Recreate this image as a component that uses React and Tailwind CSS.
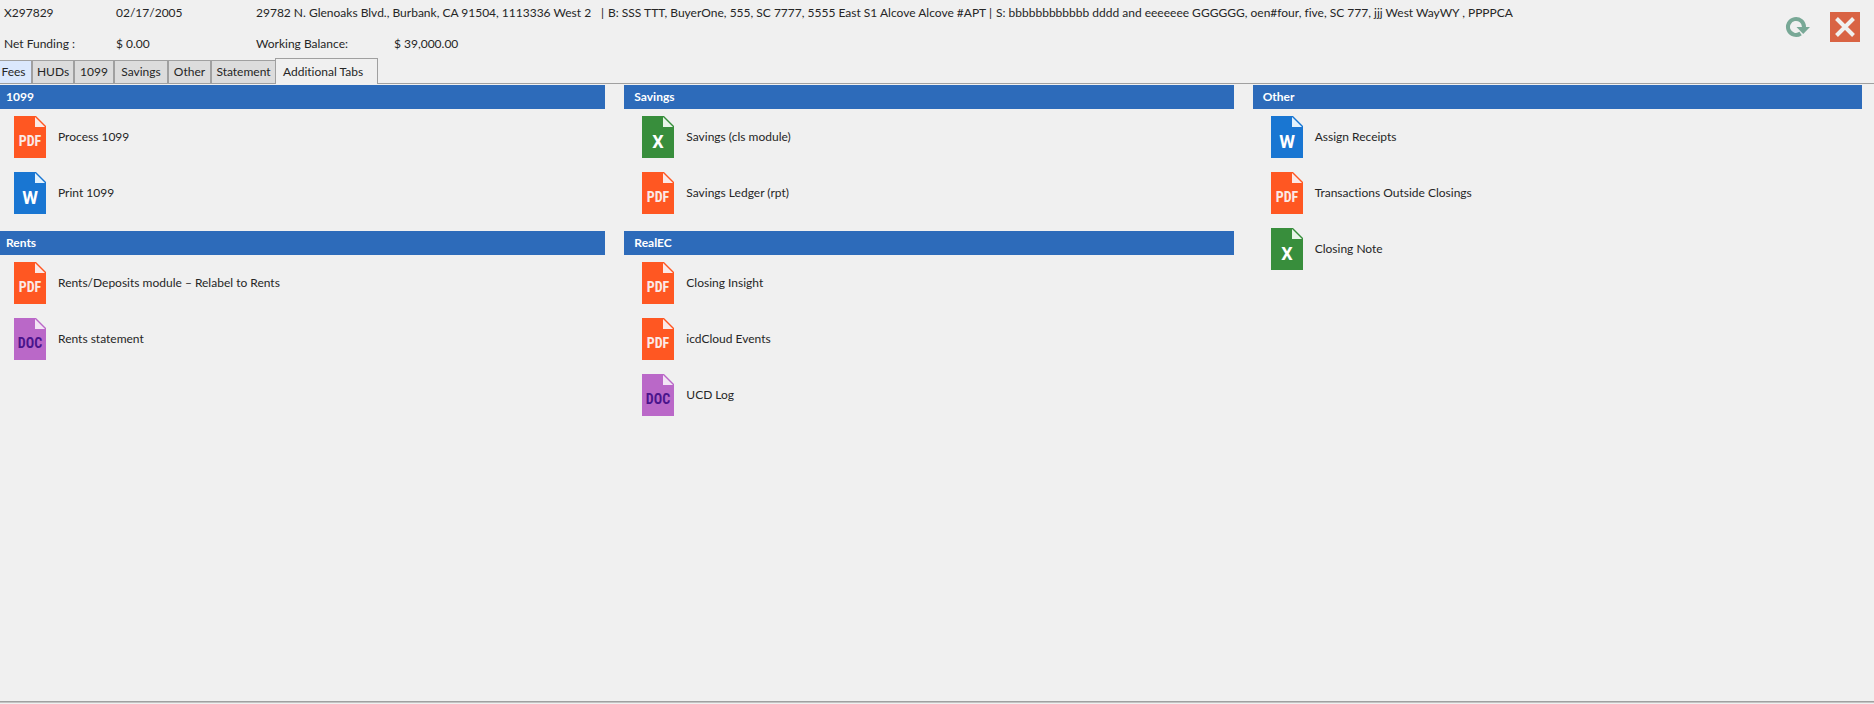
const FILE_KINDS = {
  pdf: { label: "PDF", body: "#ff5722", fold: "#fbe9e7", text: "#fbe9e7", font: "'Roboto Condensed', Roboto, sans-serif", size: 14, y: 30 },
  word: { label: "W", body: "#1976d2", fold: "#e3f2fd", text: "#ffffff", font: "Roboto, sans-serif", size: 18, y: 32 },
  excel: { label: "X", body: "#388e3c", fold: "#e8f5e9", text: "#ffffff", font: "Roboto, sans-serif", size: 18, y: 32 },
  doc: { label: "DOC", body: "#ba68c8", fold: "#f3e5f5", text: "#4a148c", font: "'Roboto Condensed', Roboto, sans-serif", size: 14, y: 30 },
};

const COLUMNS = [
  [
    { title: "1099", items: [["pdf", "Process 1099"], ["word", "Print 1099"]] },
    { title: "Rents", items: [["pdf", "Rents/Deposits module – Relabel to Rents"], ["doc", "Rents statement"]] },
  ],
  [
    { title: "Savings", items: [["excel", "Savings (cls module)"], ["pdf", "Savings Ledger (rpt)"]] },
    { title: "RealEC", items: [["pdf", "Closing Insight"], ["pdf", "icdCloud Events"], ["doc", "UCD Log"]] },
  ],
  [
    { title: "Other", items: [["word", "Assign Receipts"], ["pdf", "Transactions Outside Closings"], ["excel", "Closing Note"]] },
  ],
];

const TABS = [
  ["Fees", "w-8 border-l-0 bg-[#dbe8fd] pr-1"],
  ["HUDs", "w-[42px] bg-[#dcdcdc]"],
  ["1099", "w-10 bg-[#dcdcdc]"],
  ["Savings", "w-[54px] bg-[#dcdcdc]"],
  ["Other", "w-[43px] bg-[#dcdcdc]"],
  ["Statement", "w-16 border-r-0 bg-[#dcdcdc]"],
];

function FileIcon({ kind }) {
  const k = FILE_KINDS[kind];
  return (
    <svg width="32" height="42" viewBox="0 0 32 42" aria-hidden="true" className="shrink-0">
      <path d="M0 0h22l10 10v32H0z" fill={k.body} />
      <path d="M21 1v10h10z" fill={k.fold} />
      <text
        x="16"
        y={k.y}
        textAnchor="middle"
        fontFamily={k.font}
        fontWeight="700"
        fontSize={k.size}
        fill={k.text}
      >
        {k.label}
      </text>
    </svg>
  );
}

function Section({ title, items }) {
  return (
    <section>
      <h2 className="h-6 bg-[#2d6bba] px-2.5 font-bold leading-6 text-white">{title}</h2>
      <ul className="flex flex-col gap-3.5 px-4.5 pt-[7px] pb-[17px]">
        {items.map(([kind, label]) => (
          <li key={label}>
            <button type="button" className="flex gap-3 text-left">
              <FileIcon kind={kind} />
              <span className="pt-3 leading-[18px]">{label}</span>
            </button>
          </li>
        ))}
      </ul>
    </section>
  );
}

export default function App() {
  return (
    <div className="flex min-h-screen flex-col overflow-hidden bg-[#f0f0f0] font-[Lato,sans-serif] text-[12px] text-[#262626] [font-variant-ligatures:none]">
      <div className="flex grow flex-col border-b border-[#a0a0a0]">
        <header className="flex items-start justify-between pr-3.5 pb-[5px] pl-1">
          <div className="grid grid-cols-[112px_140px_138px_auto] gap-y-[13px] pt-1 whitespace-nowrap leading-[18px]">
            <span>X297829</span>
            <span>02/17/2005</span>
            <div className="col-span-2 flex">
              <span className="w-[345px]">29782 N. Glenoaks Blvd., Burbank, CA 91504, 1113336 West 2</span>
              <span className="w-[7px]">|</span>
              <span className="w-[381px]">B: SSS TTT, BuyerOne, 555, SC 7777, 5555 East S1 Alcove Alcove #APT</span>
              <span className="w-[7px]">|</span>
              <span>S: bbbbbbbbbbbb dddd and eeeeeee GGGGGG, oen#four, five, SC 777, jjj West WayWY , PPPPCA</span>
            </div>
            <span>Net Funding :</span>
            <span>$ 0.00</span>
            <span>Working Balance:</span>
            <span>$ 39,000.00</span>
          </div>
          <div className="flex shrink-0 items-center gap-5 pt-3">
            <button type="button" aria-label="Refresh">
              <svg width="25" height="22" viewBox="0 0 25 22">
                <path d="M15.600 17.500A8 8 0 1 1 19 11" fill="none" stroke="#78a896" strokeWidth="4" />
                <path d="M11.500 11H25L18.200 18z" fill="#78a896" />
              </svg>
            </button>
            <button type="button" aria-label="Close" className="bg-[#d96344]">
              <svg width="30" height="30" viewBox="0 0 30 30">
                <path d="M6.500 6.500L23.500 23.500M23.500 6.500L6.500 23.500" stroke="#f0f0f0" strokeWidth="4" />
              </svg>
            </button>
          </div>
        </header>
        <nav className="flex items-end" role="tablist">
          {TABS.map(([name, style]) => (
            <button
              key={name}
              type="button"
              role="tab"
              aria-selected="false"
              className={`h-6 border border-[#a0a0a0] text-center leading-[22px] ${style}`}
            >
              {name}
            </button>
          ))}
          <button
            type="button"
            role="tab"
            aria-selected="true"
            className="h-[26px] w-[103px] border border-b-0 border-[#a0a0a0] pl-[7px] text-left leading-6"
          >
            Additional Tabs
          </button>
          <div className="grow border-b border-[#a0a0a0]" />
        </nav>
        <main className="mr-3 -ml-1 grid grid-cols-3 gap-x-[19px] pt-px">
          {COLUMNS.map((sections, i) => (
            <div key={i}>
              {sections.map((s) => (
                <Section key={s.title} {...s} />
              ))}
            </div>
          ))}
        </main>
      </div>
      <div className="h-0.5 border-t border-[#c4c4c4]" />
    </div>
  );
}
